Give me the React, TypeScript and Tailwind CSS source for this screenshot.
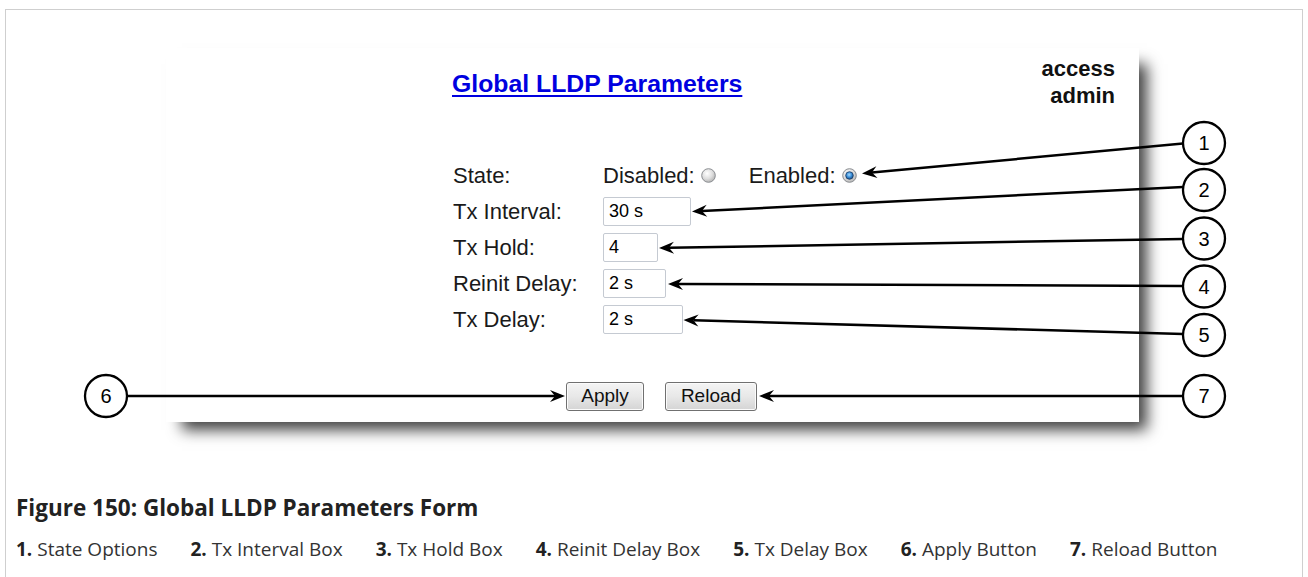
import React from "react";

type Arrow = { x1: number; y1: number; x2: number; y2: number };

function ArrowLine({ x1, y1, x2, y2 }: Arrow) {
  const dx = x2 - x1;
  const dy = y2 - y1;
  const len = Math.sqrt(dx * dx + dy * dy);
  const ux = dx / len;
  const uy = dy / len;
  const px = -uy;
  const py = ux;
  const L = 15;
  const W = 6;
  const N = 10;
  const bx = x2 - ux * L;
  const by = y2 - uy * L;
  const nx = x2 - ux * N;
  const ny = y2 - uy * N;
  const pts = [
    [x2, y2],
    [bx + px * W, by + py * W],
    [nx, ny],
    [bx - px * W, by - py * W],
  ]
    .map((p) => p.join(","))
    .join(" ");
  return (
    <g>
      <line x1={x1} y1={y1} x2={nx} y2={ny} stroke="#000" strokeWidth={2.5} />
      <polygon points={pts} fill="#000" />
    </g>
  );
}

function Callout({ cx, cy, n }: { cx: number; cy: number; n: number }) {
  return (
    <g>
      <circle cx={cx} cy={cy} r={21} fill="#fff" stroke="#000" strokeWidth={2.3} />
      <text
        x={cx}
        y={cy + 7}
        textAnchor="middle"
        fontFamily="'Liberation Sans', Arial, sans-serif"
        fontSize={20}
        fill="#000"
      >
        {n}
      </text>
    </g>
  );
}

function Radio({ checked }: { checked?: boolean }) {
  return (
    <svg width="15" height="15" viewBox="0 0 15 15" className="shrink-0">
      <defs>
        <radialGradient id="rg-off" cx="40%" cy="35%" r="70%">
          <stop offset="0%" stopColor="#ffffff" />
          <stop offset="55%" stopColor="#dedede" />
          <stop offset="100%" stopColor="#b0b0b0" />
        </radialGradient>
        <radialGradient id="rg-on" cx="45%" cy="40%" r="65%">
          <stop offset="0%" stopColor="#a9dcff" />
          <stop offset="50%" stopColor="#3b8fd9" />
          <stop offset="100%" stopColor="#123f73" />
        </radialGradient>
      </defs>
      <circle cx="7.5" cy="7.5" r="6.8" fill="url(#rg-off)" stroke="#8a8d91" strokeWidth="1" />
      {checked && <circle cx="7.5" cy="7.5" r="3.8" fill="url(#rg-on)" stroke="#1b3c66" strokeWidth="0.8" />}
    </svg>
  );
}

function TextBox({ value, w }: { value: string; w: string }) {
  return (
    <div
      className={`${w} h-[29px] border border-[#c5cad2] rounded-[2px] bg-white flex items-center pl-[5px] text-[18px] text-black`}
    >
      {value}
    </div>
  );
}

function Btn({ label, w }: { label: string; w: string }) {
  return (
    <div
      className={`${w} h-[29px] rounded-[3px] border border-[#707070] bg-gradient-to-b from-[#f4f4f4] via-[#e8e8e8] to-[#d4d4d4] shadow-[inset_0_0_0_1px_#fbfbfb] flex items-center justify-center text-[19px] text-[#111]`}
    >
      {label}
    </div>
  );
}

const rows: { label: string; value: string; w: string }[] = [
  { label: "Tx Interval:", value: "30 s", w: "w-[88px]" },
  { label: "Tx Hold:", value: "4", w: "w-[55px]" },
  { label: "Reinit Delay:", value: "2 s", w: "w-[63px]" },
  { label: "Tx Delay:", value: "2 s", w: "w-[80px]" },
];

const legend: [string, string][] = [
  ["1.", "State Options"],
  ["2.", "Tx Interval Box"],
  ["3.", "Tx Hold Box"],
  ["4.", "Reinit Delay Box"],
  ["5.", "Tx Delay Box"],
  ["6.", "Apply Button"],
  ["7.", "Reload Button"],
];

const arrows: Arrow[] = [
  { x1: 1183, y1: 143.5, x2: 862, y2: 173.5 },
  { x1: 1183, y1: 187, x2: 692, y2: 211.5 },
  { x1: 1183, y1: 239, x2: 659, y2: 248 },
  { x1: 1183, y1: 286, x2: 668, y2: 284 },
  { x1: 1183, y1: 334, x2: 683.5, y2: 320 },
  { x1: 127, y1: 396, x2: 565, y2: 396 },
  { x1: 1183, y1: 396, x2: 759, y2: 396 },
];

const callouts = [
  { cx: 1204, cy: 143, n: 1 },
  { cx: 1204, cy: 190, n: 2 },
  { cx: 1204, cy: 238.5, n: 3 },
  { cx: 1204, cy: 286.5, n: 4 },
  { cx: 1204, cy: 335, n: 5 },
  { cx: 106, cy: 396, n: 6 },
  { cx: 1204, cy: 396, n: 7 },
];

export default function App() {
  return (
    <div className="relative w-[1308px] h-[577px] overflow-hidden bg-white">
      <div className="ml-[5px] mt-[9px] w-[1298px] h-[580px] border-l border-t border-r border-[#cfcfcf] flex flex-col">
        {/* figure area */}
        <div className="h-[460px] pl-[160px] pt-[38px]">
          <div className="w-[973px] h-[374px] bg-white shadow-[12px_12px_14px_-4px_rgba(0,0,0,0.75)] pt-[7px] font-['Liberation_Sans',Arial,sans-serif] text-black">
            <div className="flex justify-between">
              <div className="ml-[286px] mt-[14px] leading-[30px] text-[24.8px] font-bold text-[#0000e0] underline decoration-[2px] underline-offset-[3px]">
                Global LLDP Parameters
              </div>
              <div className="mr-[24px] text-right text-[22px] font-bold leading-[27px] text-[#111]">
                <div>access</div>
                <div>admin</div>
              </div>
            </div>
            <div className="ml-[287px] mt-[48px] text-[22px] text-[#1a1a1a]">
              <div className="h-[36px] flex items-center">
                <div className="w-[150px]">State:</div>
                <span>Disabled:</span>
                <span className="ml-[6px] flex">
                  <Radio />
                </span>
                <span className="ml-[33px]">Enabled:</span>
                <span className="ml-[6px] flex">
                  <Radio checked />
                </span>
              </div>
              {rows.map((r) => (
                <div key={r.label} className="h-[36px] flex items-center">
                  <div className="w-[150px]">{r.label}</div>
                  <TextBox value={r.value} w={r.w} />
                </div>
              ))}
              <div className="mt-[45px] ml-[113px] flex gap-[21px]">
                <Btn label="Apply" w="w-[78px]" />
                <Btn label="Reload" w="w-[92px]" />
              </div>
            </div>
          </div>
        </div>
        {/* caption */}
        <div className="pl-[10px] font-['Open_Sans',sans-serif] text-[#222]">
          <div className="mt-[24px] text-[22.5px] leading-[28px] font-bold">
            Figure 150: Global LLDP Parameters Form
          </div>
          <div className="mt-[14px] flex gap-[33px] text-[19px] leading-[26px] text-[#333]">
            {legend.map(([n, t]) => (
              <span key={n}>
                <span className="font-bold text-[#222]">{n}</span> {t}
              </span>
            ))}
          </div>
        </div>
      </div>
      <svg className="absolute left-0 top-0 pointer-events-none" width="1308" height="577">
        {arrows.map((a, i) => (
          <ArrowLine key={i} {...a} />
        ))}
        {callouts.map((c) => (
          <Callout key={c.n} {...c} />
        ))}
      </svg>
    </div>
  );
}
